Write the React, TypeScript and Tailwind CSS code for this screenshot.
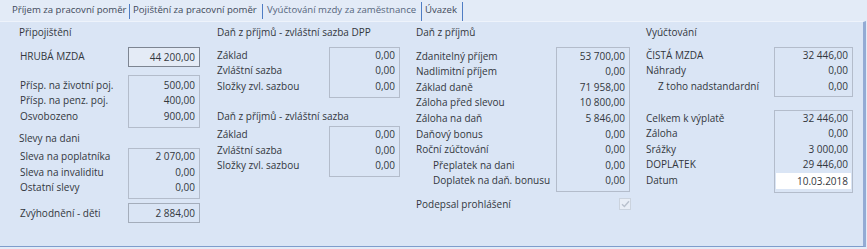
import React from "react";

type R = { l: string; v: string; ind?: string; white?: boolean };

function Labels({ rows }: { rows: R[] }) {
  return (
    <>
      {rows.map((r, i) => (
        <div key={i} className={"h-[15.6px] leading-[15.6px] whitespace-nowrap " + (r.ind ?? "")}>
          {r.l}
        </div>
      ))}
    </>
  );
}

function Values({ rows }: { rows: R[] }) {
  return (
    <>
      {rows.map((r, i) =>
        r.white ? (
          <div key={i} className="h-[16px] leading-[16px] bg-white text-right pr-[3px] mx-[1px]">
            {r.v}
          </div>
        ) : (
          <div key={i} className="h-[15.6px] leading-[15.6px] text-right pr-[4px]">
            {r.v}
          </div>
        )
      )}
    </>
  );
}

const tabSep = "w-[1px] h-[15px] bg-[#4f7dc4] self-center";

export default function App() {
  return (
    <div
      className="w-[867px] h-[249px] bg-[#e3ebf7] text-[#33373d] text-[10px] overflow-hidden"
      style={{ fontFamily: '"Open Sans", "Noto Sans", sans-serif' }}
    >
      {/* tabs */}
      <div className="h-[21px] flex items-stretch pl-[8px] pt-[2px] text-[#3f4a5a] text-[9.6px]">
        <div className="w-[121px] pl-[4px] leading-[16px] whitespace-nowrap">Příjem za pracovní poměr</div>
        <div className={tabSep} />
        <div className="w-[132px] pl-[3px] leading-[16px] whitespace-nowrap">Pojištění za pracovní poměr</div>
        <div className={tabSep} />
        <div className="w-[158px] pl-[4px] leading-[16px] whitespace-nowrap text-[#56667d]">
          Vyúčtování mzdy za zaměstnance
        </div>
        <div className="w-[42px] border-l border-r border-[#4f7dc4] pl-[3px] leading-[16px] whitespace-nowrap">
          Úvazek
        </div>
      </div>

      {/* panel */}
      <div className="h-[226px] w-[866px] bg-[#dae5f5] border-t border-t-[#eef3fb] border-r-[3px] border-r-[#93abd4] border-b border-b-[#7e9dcc] flex pt-[3px]">
        {/* col 1 */}
        <div className="w-[207px] pl-[20px] flex flex-col">
          <div className="h-[15.6px] leading-[15.6px] -ml-[1px]">Připojištění</div>
          <div className="flex mt-[6px] items-center">
            <div className="w-[108px] whitespace-nowrap">HRUBÁ MZDA</div>
            <div className="w-[72px] h-[20px] border border-[#7d8592] bg-[#e4ebf6] text-right pr-[4px] leading-[18px]">
              44 200,00
            </div>
          </div>
          <div className="flex mt-[8px]">
            <div className="w-[108px] pt-[3px]">
              <Labels rows={rows1a} />
            </div>
            <div className="w-[72px] h-[53px] border border-[#b3bccb] pt-[2px]">
              <Values rows={rows1a} />
            </div>
          </div>
          <div className="h-[15.6px] leading-[15.6px] mt-[3px] -ml-[1px]">Slevy na dani</div>
          <div className="flex mt-[2px]">
            <div className="w-[108px] pt-[1px]">
              <Labels rows={rows1b} />
            </div>
            <div className="w-[72px] h-[51px] border border-[#b3bccb]">
              <Values rows={rows1b} />
            </div>
          </div>
          <div className="flex mt-[4px] items-center">
            <div className="w-[108px] whitespace-nowrap">Zvýhodnění - děti</div>
            <div className="w-[72px] h-[20px] border border-[#a4adbb] text-right pr-[4px] leading-[18px]">
              2 884,00
            </div>
          </div>
        </div>

        {/* col 2 */}
        <div className="w-[200px] pl-[10px] flex flex-col">
          <div className="h-[15.6px] leading-[15.6px] whitespace-nowrap">Daň z příjmů - zvláštní sazba DPP</div>
          <div className="flex mt-[6px]">
            <div className="w-[112px] pt-[1px]">
              <Labels rows={rows2} />
            </div>
            <div className="w-[71px] h-[51px] border border-[#b3bccb]">
              <Values rows={rows2} />
            </div>
          </div>
          <div className="h-[15.6px] leading-[15.6px] mt-[11px] whitespace-nowrap">Daň z příjmů - zvláštní sazba</div>
          <div className="flex mt-[2px]">
            <div className="w-[112px] pt-[1px]">
              <Labels rows={rows2} />
            </div>
            <div className="w-[71px] h-[51px] border border-[#b3bccb]">
              <Values rows={rows2} />
            </div>
          </div>
        </div>

        {/* col 3 */}
        <div className="w-[230px] pl-[9px] flex flex-col">
          <div className="h-[15.6px] leading-[15.6px]">Daň z příjmů</div>
          <div className="flex mt-[6px]">
            <div className="w-[140px] pt-[2px]">
              <Labels rows={rows3} />
            </div>
            <div className="w-[74px] h-[145px] border border-[#b3bccb] pt-[1px]">
              <Values rows={rows3} />
            </div>
          </div>
          <div className="flex w-[215px] justify-between items-center mt-[5px]">
            <span>Podepsal prohlášení</span>
            <div className="w-[12px] h-[12px] border border-[#cbd3de] bg-[#e9eef6] flex items-center justify-center">
              <svg width="9" height="8" viewBox="0 0 9 8">
                <path d="M1 4.2 L3.4 6.5 L8 1.2" fill="none" stroke="#b9c1cd" strokeWidth="1.4" />
              </svg>
            </div>
          </div>
        </div>

        {/* col 4 */}
        <div className="w-[226px] pl-[9px] flex flex-col">
          <div className="h-[15.6px] leading-[15.6px]">Vyúčtování</div>
          <div className="flex mt-[6px]">
            <div className="w-[128px] pt-[1px]">
              <Labels rows={rows4a} />
            </div>
            <div className="w-[79px] h-[50px] border border-[#b3bccb]">
              <Values rows={rows4a} />
            </div>
          </div>
          <div className="flex mt-[13px]">
            <div className="w-[128px] pt-[1px]">
              <Labels rows={rows4b} />
            </div>
            <div className="w-[79px] h-[83px] border border-[#b3bccb]">
              <Values rows={rows4b} />
            </div>
          </div>
        </div>
      </div>
    </div>
  );
}

const rows1a: R[] = [
  { l: "Přísp. na životní poj.", v: "500,00" },
  { l: "Přísp. na penz. poj.", v: "400,00" },
  { l: "Osvobozeno", v: "900,00" },
];
const rows1b: R[] = [
  { l: "Sleva na poplatníka", v: "2 070,00" },
  { l: "Sleva na invaliditu", v: "0,00" },
  { l: "Ostatní slevy", v: "0,00" },
];
const rows2: R[] = [
  { l: "Základ", v: "0,00" },
  { l: "Zvláštní sazba", v: "0,00" },
  { l: "Složky zvl. sazbou", v: "0,00" },
];
const rows3: R[] = [
  { l: "Zdanitelný příjem", v: "53 700,00" },
  { l: "Nadlimitní příjem", v: "0,00" },
  { l: "Základ daně", v: "71 958,00" },
  { l: "Záloha před slevou", v: "10 800,00" },
  { l: "Záloha na daň", v: "5 846,00" },
  { l: "Daňový bonus", v: "0,00" },
  { l: "Roční zúčtování", v: "0,00" },
  { l: "Přeplatek na dani", v: "0,00", ind: "pl-[17px]" },
  { l: "Doplatek na daň. bonusu", v: "0,00", ind: "pl-[17px]" },
];
const rows4a: R[] = [
  { l: "ČISTÁ MZDA", v: "32 446,00" },
  { l: "Náhrady", v: "0,00" },
  { l: "Z toho nadstandardní", v: "0,00", ind: "pl-[12px]" },
];
const rows4b: R[] = [
  { l: "Celkem k výplatě", v: "32 446,00" },
  { l: "Záloha", v: "0,00" },
  { l: "Srážky", v: "3 000,00" },
  { l: "DOPLATEK", v: "29 446,00" },
  { l: "Datum", v: "10.03.2018", white: true },
];
